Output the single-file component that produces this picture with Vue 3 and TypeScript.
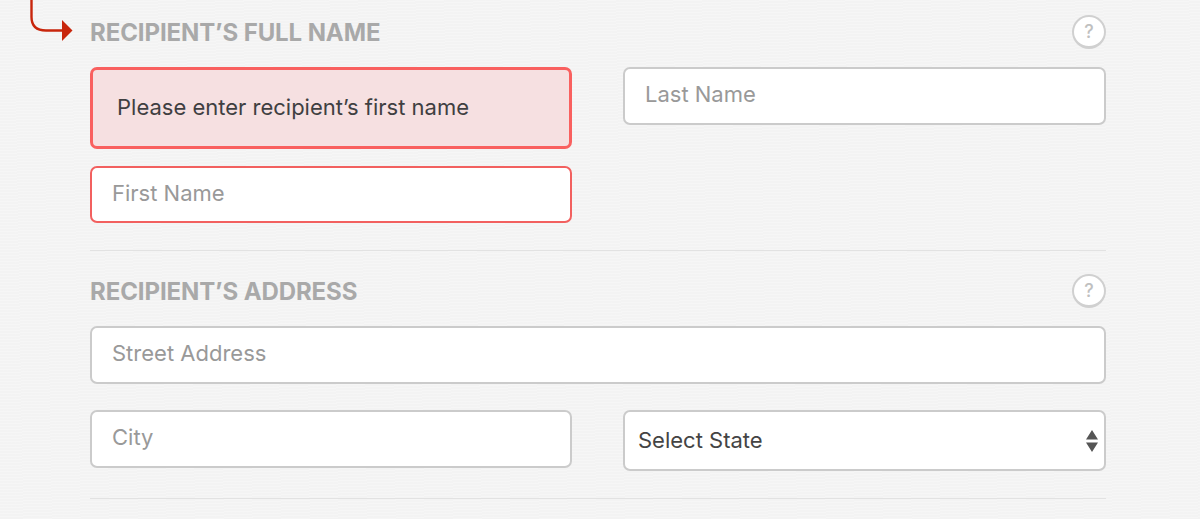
<script setup lang="ts">
const states: string[] = ['Select State']
</script>

<template>
  <div class="page">
    <svg class="arrow" width="76" height="44" viewBox="0 0 76 44">
      <path d="M31.5 0 V17 Q31.5 30.5 46 30.5 H63" fill="none" stroke="#c8260c" stroke-width="2.4" />
      <path d="M62 20 L72.5 30.5 L62 41 Z" fill="#c8260c" />
    </svg>

    <section class="group first">
      <header class="head">
        <h2>RECIPIENT’S FULL NAME</h2>
        <span class="help">?</span>
      </header>
      <div class="row">
        <div class="col">
          <div class="error-msg">Please enter recipient’s first name</div>
          <input class="field invalid" placeholder="First Name" />
        </div>
        <div class="col">
          <input class="field" placeholder="Last Name" />
        </div>
      </div>
    </section>

    <section class="group second">
      <header class="head">
        <h2>RECIPIENT’S ADDRESS</h2>
        <span class="help">?</span>
      </header>
      <input class="field street" placeholder="Street Address" />
      <div class="row">
        <div class="col">
          <input class="field" placeholder="City" />
        </div>
        <div class="col select-wrap">
          <select class="field select">
            <option v-for="s in states" :key="s">{{ s }}</option>
          </select>
          <svg class="carets" width="12" height="22" viewBox="0 0 12 22">
            <path d="M6 0 L12 9.5 H0 Z M0 12.5 H12 L6 22 Z" fill="#555" />
          </svg>
        </div>
      </div>
    </section>
  </div>
</template>

<style>
html, body { margin: 0; background: #f4f4f4; }
</style>

<style scoped>
.page {
  position: relative;
  box-sizing: border-box;
  width: 1200px;
  height: 519px;
  overflow: hidden;
  padding: 0 94px 0 90px;
  background-color: #f4f4f4;
  background-image: repeating-linear-gradient(178deg, rgba(255,255,255,0.2) 0 1px, rgba(0,0,0,0.003) 1px 3px);
  font-family: Inter, "Liberation Sans", sans-serif;
}
.arrow { position: absolute; left: 0; top: 0; }
.group { border-bottom: 1px solid #e2e2e2; box-sizing: border-box; }
.group.first { height: 251px; padding-top: 15px; }
.group.second { height: 248px; padding-top: 23px; }
.head { display: flex; justify-content: space-between; align-items: center; height: 34px; margin-bottom: 18px; }
h2 { margin: 0; font-size: 24px; font-weight: 700; color: #a9a9a9; letter-spacing: -0.1px; }
.help {
  box-sizing: border-box;
  width: 34px;
  height: 34px;
  border: 2px solid #d0d0d0;
  border-bottom-width: 3px;
  border-radius: 50%;
  background: #fff;
  color: #c0c0c0;
  font-size: 18px;
  font-weight: 500;
  display: flex;
  align-items: center;
  justify-content: center;
}
.row { display: grid; grid-template-columns: 482px 483px; column-gap: 51px; align-items: start; }
.col { display: flex; flex-direction: column; }
.field {
  display: block;
  box-sizing: border-box;
  width: 100%;
  height: 58px;
  padding: 0 20px 4px;
  background: #fff;
  border: 2px solid #cbcbcb;
  border-radius: 7px;
  font-family: inherit;
  font-size: 22px;
  color: #555;
  outline: none;
}
.field::placeholder { color: #999; opacity: 1; }
.field.invalid { border-color: #f2605f; height: 57px; }
.street { margin-bottom: 26px; }
.error-msg {
  box-sizing: border-box;
  height: 82px;
  margin-bottom: 17px;
  padding: 0 24px 2px;
  display: flex;
  align-items: center;
  background: #f6e0e1;
  border: 3px solid #f9605f;
  border-radius: 7px;
  font-size: 22px;
  color: #3f3f41;
}
.select-wrap { position: relative; }
.select {
  appearance: none;
  height: 61px;
  padding: 0 13px 2px;
  color: #444;
}
.carets { position: absolute; right: 8px; top: 20px; }
</style>
